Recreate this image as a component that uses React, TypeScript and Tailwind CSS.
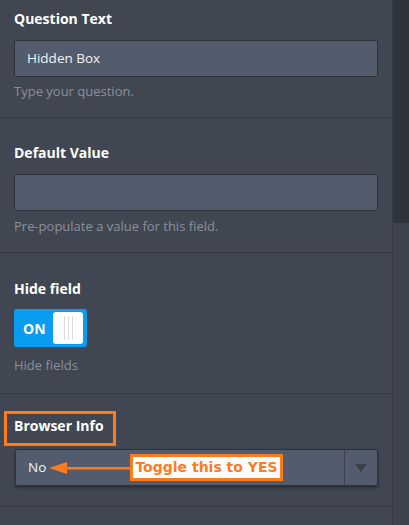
export default function App() {
  return (
    <div className="flex h-[525px] w-[409px] overflow-hidden bg-[#404652] font-['Open_Sans',sans-serif]">
      <div className="flex-1">
        {/* Question Text */}
        <div className="border-b border-[#343941] px-[14px] pt-[9px] pb-[17px]">
          <div className="text-[14px] font-bold leading-[20px] text-white">Question Text</div>
          <div className="mt-[11px] flex h-[37px] items-center rounded-[2px] border border-[#2d323a] bg-[#525c6d] px-[12px] text-[13.5px] text-[#f1f3f5]">
            Hidden Box
          </div>
          <div className="mt-[5px] text-[13px] leading-[18px] text-[#8a919c]">Type your question.</div>
        </div>

        {/* Default Value */}
        <div className="border-b border-[#343941] px-[14px] pt-[25px] pb-[17px]">
          <div className="text-[14px] font-bold leading-[20px] text-white">Default Value</div>
          <div className="mt-[11px] h-[37px] rounded-[2px] border border-[#2d323a] bg-[#525c6d]" />
          <div className="mt-[6px] text-[13px] leading-[18px] text-[#8a919c]">Pre-populate a value for this field.</div>
        </div>

        {/* Hide field */}
        <div className="border-b border-[#343941] px-[14px] pt-[26px] pb-[19px]">
          <div className="text-[14px] font-bold leading-[20px] text-white">Hide field</div>
          <div className="mt-[10px] flex h-[38px] w-[73px] items-center justify-between rounded-[3px] bg-[#0a9cf0] pl-[9px] pr-[4px]">
            <span className="text-[14px] font-bold text-white">ON</span>
            <span className="flex h-[32px] w-[30px] items-center justify-center gap-[3px] rounded-[3px] bg-white">
              <span className="h-[24px] w-[1px] bg-[#d9dce0]" />
              <span className="h-[24px] w-[1px] bg-[#d9dce0]" />
              <span className="h-[24px] w-[1px] bg-[#d9dce0]" />
            </span>
          </div>
          <div className="mt-[9px] text-[13px] leading-[18px] text-[#8a919c]">Hide fields</div>
        </div>

        {/* Browser Info */}
        <div className="border-b border-[#343941] px-[14px] pt-[22px] pb-[20px]">
          <div className="relative text-[14px] font-bold leading-[20px] text-white">
            Browser Info
            <span className="absolute left-[-10px] top-[-5px] h-[35px] w-[112px] border-[3px] border-[#ff7b1c]" />
          </div>
          <div className="relative ml-[1px] mt-[13px] flex h-[37px] items-center rounded-[2px] border border-[#2d323a] bg-[#525c6d] shadow-[0_2px_3px_rgba(0,0,0,0.35)]">
            <span className="flex-1 pl-[12px] text-[13.5px] text-[#f1f3f5]">No</span>
            <span className="flex h-full w-[33px] items-center justify-center border-l border-[#3c424c]">
              <svg width="12" height="8" viewBox="0 0 12 8">
                <path d="M0 0 H12 L6 8 Z" fill="#3a3f48" />
              </svg>
            </span>
            {/* annotation */}
            <svg className="absolute left-[33px] top-[11px]" width="84" height="14" viewBox="0 0 84 14">
              <path d="M0 7 L18 1 L18 13 Z" fill="#ff7b1c" />
              <rect x="16" y="6" width="68" height="2.5" fill="#ff7b1c" />
            </svg>
            <span className="absolute left-[114px] top-[4px] flex h-[27px] w-[153px] items-center justify-center border-[3px] border-[#ff7b1c] bg-white font-['DejaVu_Sans',sans-serif] text-[14px] font-bold text-[#ff7b1c]">
              Toggle this to YES
            </span>
          </div>
        </div>
      </div>

      {/* scrollbar */}
      <div className="flex w-[17px] flex-col border-l border-[#353a43] bg-[#3e444e]">
        <div className="h-[223px] bg-[#2f343c]" />
      </div>
    </div>
  )
}
